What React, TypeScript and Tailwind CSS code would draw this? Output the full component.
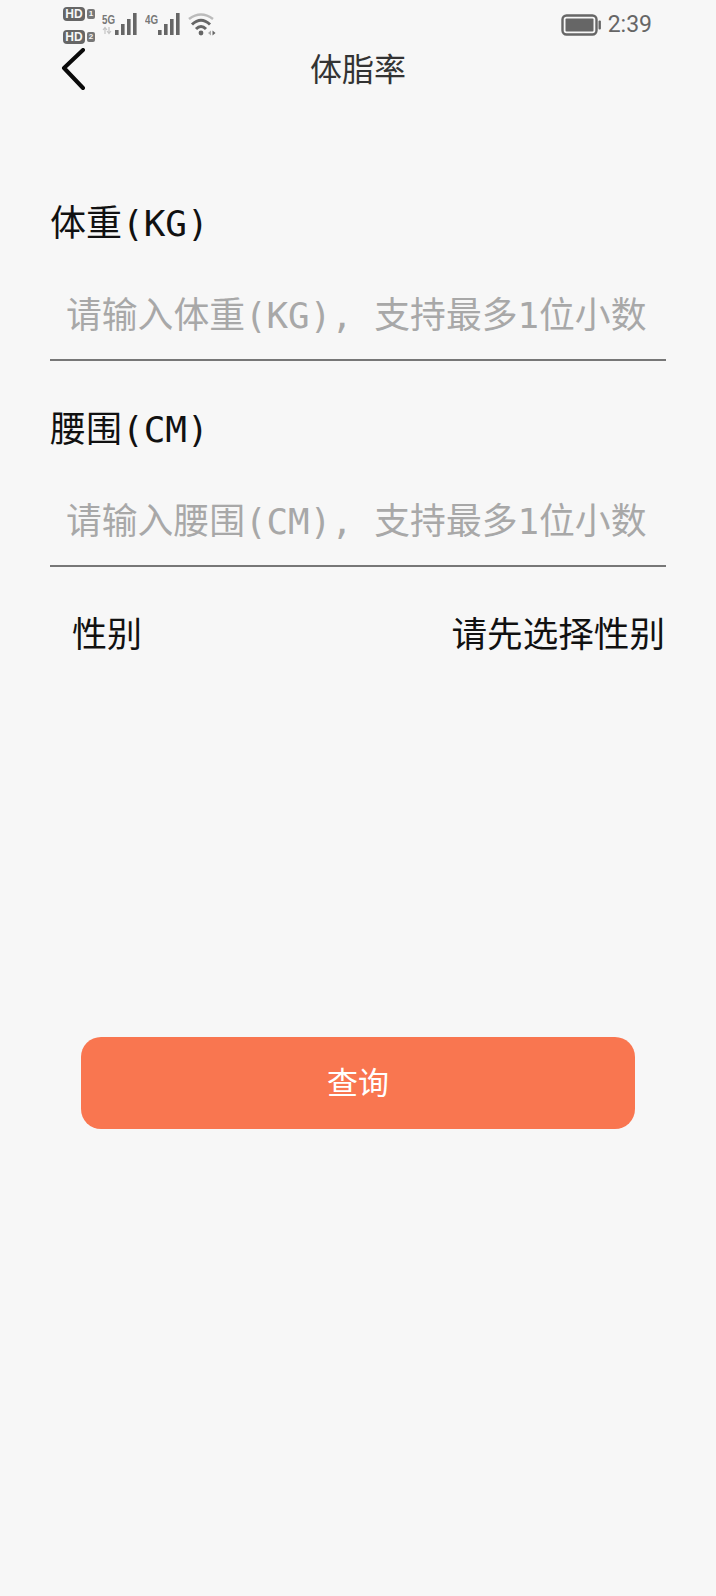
const cjk = "font-['DejaVu_Sans_Mono','Noto_Sans_CJK_SC',monospace]";

function Hd({ n }: { n: string }) {
  return (
    <div className="flex items-center gap-[2px]">
      <span className="flex h-[14px] w-[22px] items-center justify-center rounded-[4px] bg-[#666] font-['Liberation_Sans',sans-serif] text-[12px] font-bold leading-none text-[#f7f7f7]">
        HD
      </span>
      <span className="flex h-[10px] w-[8px] items-center justify-center rounded-[2px] bg-[#777] font-['Liberation_Sans',sans-serif] text-[8px] font-bold leading-none text-[#f7f7f7]">
        {n}
      </span>
    </div>
  );
}

function Signal({ label, arrows }: { label: string; arrows?: boolean }) {
  return (
    <svg width="36" height="24" viewBox="0 0 36 24" fill="none">
      <text x="0" y="11" fontFamily="'Liberation Sans',sans-serif" fontSize="13" fontWeight="700" fill="#777" textLength="13" lengthAdjust="spacingAndGlyphs">
        {label}
      </text>
      {arrows && (
        <path d="M3 21 V15 M1 17 L3 14.5 L5 17 M7 14 V20 M5 18 L7 20.5 L9 18" stroke="#c4c4c4" strokeWidth="1.2" />
      )}
      <rect x="13" y="17" width="3.6" height="5" fill="#666" />
      <rect x="19" y="11" width="3.6" height="11" fill="#666" />
      <rect x="25" y="6" width="3.6" height="16" fill="#666" />
      <rect x="31" y="0" width="3.6" height="22" fill="#666" />
    </svg>
  );
}

function Wifi() {
  return (
    <svg width="28" height="24" viewBox="0 0 28 24" fill="none">
      <path d="M1 6 Q13 -3 25 6" stroke="#bbb" strokeWidth="2.6" />
      <path d="M4 11.5 Q13 3 22 11.5" stroke="#666" strokeWidth="3" />
      <path d="M8 16 Q13 11 18 16" stroke="#666" strokeWidth="3" />
      <circle cx="13" cy="20" r="2.4" fill="#666" />
      <path d="M20 20 L23 17.5 V22.5 Z" fill="#aaa" />
      <path d="M24.5 17.5 L27.5 20 L24.5 22.5 Z" fill="#666" />
    </svg>
  );
}

function Field({ label, placeholder }: { label: string; placeholder: string }) {
  return (
    <div className="flex flex-col">
      <div className="h-[50px] text-[36px] leading-[50px] text-[#111]">{label}</div>
      <div className="flex h-[112px] items-center border-b-2 border-[#777] pl-[16px] pt-[24px] text-[35.8px] leading-none text-[#a8a8a8]">
        {placeholder}
      </div>
    </div>
  );
}

export default function App() {
  return (
    <div className={`flex h-[1596px] w-[716px] flex-col overflow-hidden bg-[#f7f7f7] ${cjk}`}>
      <div className="flex h-[48px] items-start justify-between pl-[63px] pr-[64px] pt-[7px]">
        <div className="flex items-start gap-[7px]">
          <div className="flex flex-col gap-[9px]">
            <Hd n="1" />
            <Hd n="2" />
          </div>
          <div className="mt-[6px] flex items-start gap-[7px]">
            <Signal label="5G" arrows />
            <Signal label="4G" />
            <Wifi />
          </div>
        </div>
        <div className="mt-[6px] flex items-center gap-[7px]">
          <svg width="40" height="22" viewBox="0 0 40 22" fill="none">
            <rect x="1.5" y="1.5" width="34" height="19" rx="4" stroke="#666" strokeWidth="2.4" />
            <rect x="4.5" y="4.5" width="28" height="13" rx="1" fill="#666" />
            <rect x="37.5" y="6.5" width="2.4" height="9" rx="1" fill="#666" />
          </svg>
          <span className="font-['Roboto',sans-serif] text-[23px] leading-none text-[#666]">2:39</span>
        </div>
      </div>

      <div className="relative flex h-[44px] items-center justify-center">
        <svg className="absolute left-[60px] top-0" width="28" height="44" viewBox="0 0 28 44" fill="none">
          <path d="M23 2 L4 20 L23 40" stroke="#0a0a0a" strokeWidth="4" strokeLinecap="round" strokeLinejoin="round" />
        </svg>
        <span className="text-[32px] leading-none text-[#333]">体脂率</span>
      </div>

      <div className="mt-[107px] flex flex-col gap-[44px] pl-[50px] pr-[50px]">
        <Field label="体重(KG)" placeholder="请输入体重(KG), 支持最多1位小数" />
        <Field label="腰围(CM)" placeholder="请输入腰围(CM), 支持最多1位小数" />
      </div>

      <div className="mt-[43px] flex items-center justify-between pl-[72px] pr-[51px] text-[35px] leading-[50px] text-[#111]">
        <span>性别</span>
        <span className="text-[35.6px]">请先选择性别</span>
      </div>

      <div className="mt-[377px] px-[81px]">
        <button className="flex h-[92px] w-full items-center justify-center rounded-[20px] bg-[#f97650] text-[31px] leading-none text-white">
          查询
        </button>
      </div>
    </div>
  );
}
